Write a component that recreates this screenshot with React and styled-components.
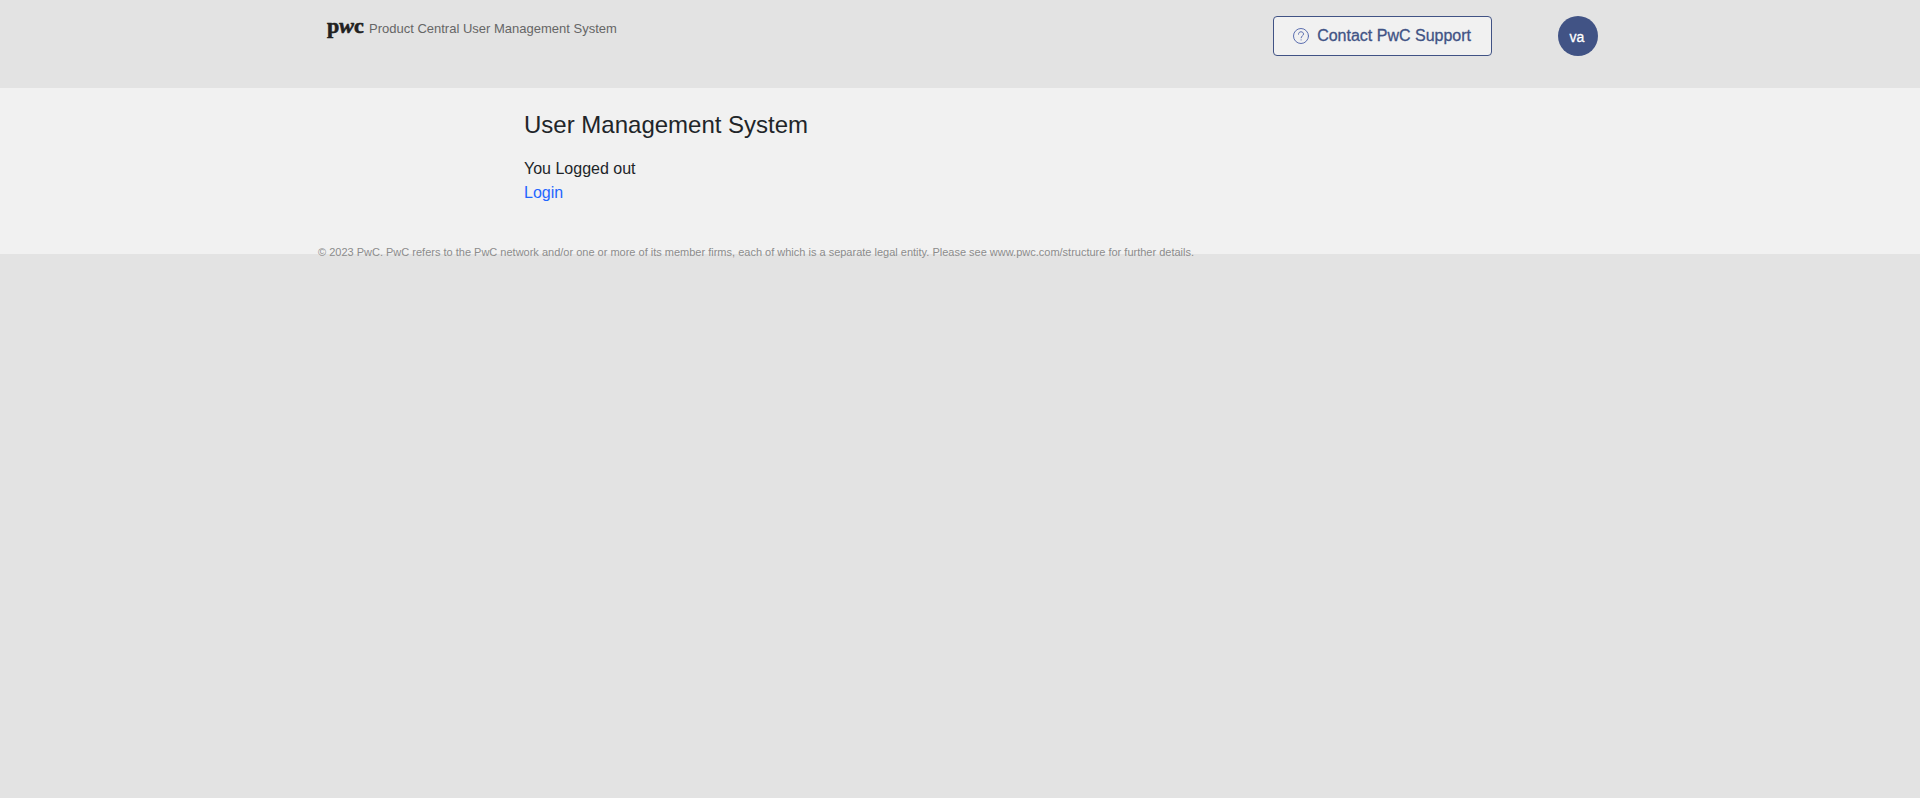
import React from "react";
import styled, { createGlobalStyle } from "styled-components";

const GlobalStyle = createGlobalStyle`
  *, *::before, *::after { box-sizing: border-box; }
  body {
    margin: 0;
    background: #e3e3e3;
    color: #212529;
    font-family: "Liberation Sans", Arial, sans-serif;
    font-size: 16px;
    line-height: 24px;
  }
`;

const Header = styled.header`
  background: #e3e3e3;
`;

const HeaderInner = styled.div`
  display: flex;
  align-items: flex-start;
  justify-content: space-between;
  max-width: 1320px;
  min-height: 88px;
  margin: 0 auto;
  padding: 16px 22px 16px 27px;
`;

const Brand = styled.div`
  display: flex;
  align-items: flex-start;
  gap: 5px;
`;

const Logo = styled.svg`
  display: block;
  width: 37px;
  height: 24px;
  overflow: visible;
  fill: #212121;
  stroke: #212121;
  stroke-width: 0.6px;
  font-family: "Liberation Serif", "Times New Roman", serif;
  font-size: 22px;
  font-weight: 700;
`;

const ProductName = styled.span`
  color: #666;
  font-size: 13px;
  line-height: 26px;
`;

const Actions = styled.div`
  display: flex;
  align-items: center;
  gap: 66px;
`;

const SupportButton = styled.button`
  display: flex;
  align-items: center;
  gap: 8px;
  height: 40px;
  padding: 0 20px 0 19px;
  border: 1px solid #415385;
  border-radius: 4px;
  background: #f1f1f1;
  color: #415385;
  font: inherit;
  -webkit-text-stroke: 0.3px currentColor;
  cursor: pointer;
`;

const HelpIcon = styled.svg`
  width: 16px;
  height: 16px;
  fill: none;
  stroke: #5c6fb0;
  stroke-linecap: round;
`;

const Avatar = styled.button`
  width: 40px;
  height: 40px;
  padding: 2px 2px 0 0;
  border: 0;
  border-radius: 50%;
  background: #415385;
  color: #fff;
  font: 14px "Liberation Sans", Arial, sans-serif;
  -webkit-text-stroke: 0.3px currentColor;
  cursor: pointer;
`;

const Main = styled.main`
  background: #f1f1f1;
`;

const MainInner = styled.div`
  max-width: 872px;
  min-height: 166px;
  margin: 0 auto;
  padding: 21px 0 40px;
`;

const Title = styled.h1`
  margin: 0 0 16px;
  font-size: 24px;
  font-weight: 400;
  line-height: 32px;
`;

const Message = styled.p`
  margin: 0;
`;

const LoginLink = styled.a`
  color: #1f66ff;
  text-decoration: none;
`;

const Footer = styled.footer`
  position: relative;
  max-width: 1320px;
  margin: -10px auto 0;
  padding: 0 18px;
  color: #8c8c8c;
  font-size: 11px;
  line-height: 16px;
`;

export default function App() {
  return (
    <>
      <GlobalStyle />
      <Header>
        <HeaderInner>
          <Brand>
            <Logo viewBox="0 0 37 24" role="img" aria-label="pwc">
              <text y="17">
                p<tspan fontStyle="italic">w</tspan>c
              </text>
            </Logo>
            <ProductName>Product Central User Management System</ProductName>
          </Brand>
          <Actions>
            <SupportButton type="button">
              <HelpIcon viewBox="0 0 16 16" aria-hidden="true">
                <circle cx="8" cy="8" r="7.5" />
                <path d="M5.5 6.2C5.5 4.6 6.6 3.8 8 3.8s2.5.8 2.5 2.2c0 1.9-2.4 1.9-2.4 3.8" />
                <path d="M8.1 11.8v.2" />
              </HelpIcon>
              Contact PwC Support
            </SupportButton>
            <Avatar type="button" aria-label="va">va</Avatar>
          </Actions>
        </HeaderInner>
      </Header>
      <Main>
        <MainInner>
          <Title>User Management System</Title>
          <Message>You Logged out</Message>
          <LoginLink href="#login">Login</LoginLink>
        </MainInner>
      </Main>
      <Footer>
        © 2023 PwC. PwC refers to the PwC network and/or one or more of its member firms, each of which is a
        separate legal entity. Please see www.pwc.com/structure for further details.
      </Footer>
    </>
  );
}
